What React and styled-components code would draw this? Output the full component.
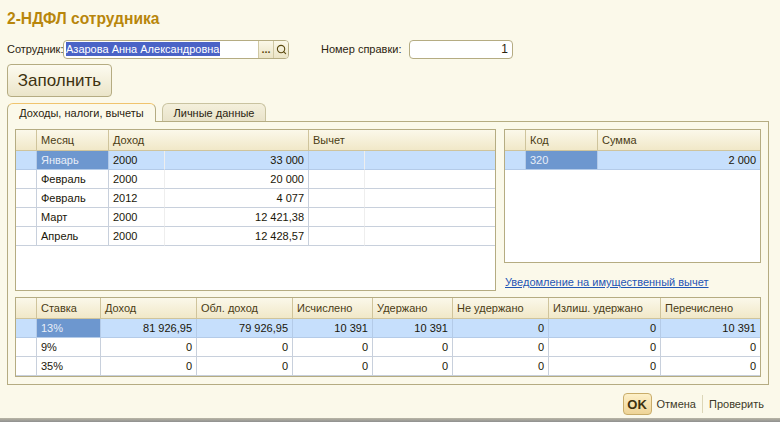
import React from "react";
import styled, { createGlobalStyle } from "styled-components";
import { Search } from "lucide-react";

const Global = createGlobalStyle`
  html, body { margin: 0; padding: 0; overflow: hidden; }
  body { font-family: "Liberation Sans", Arial, sans-serif; font-size: 11px; color: #2b2410; }
  * { box-sizing: border-box; }
`;

const Page = styled.div`
  width: 780px;
  height: 422px;
  background: #fbf9ea;
  display: flex;
  flex-direction: column;
  padding: 0 11px 0 7px;
  position: relative;
`;
const Title = styled.h1`
  margin: 0;
  height: 39px;
  padding-top: 10px;
  font-size: 15.6px;
  line-height: 18px;
  font-weight: bold;
  color: #b8860b;
`;
const FieldRow = styled.div`
  display: flex;
  align-items: center;
  height: 20px;
`;
const Label = styled.span`
  white-space: nowrap;
  width: ${p => p.$w}px;
  margin-left: ${p => p.$ml || 0}px;
`;
const Field = styled.div`
  width: ${p => p.$w}px;
  height: 19px;
  background: #fff;
  border: 1px solid #b5ac82;
  border-radius: 4px;
  display: flex;
  align-items: center;
  overflow: hidden;
  justify-content: ${p => (p.$right ? "flex-end" : "flex-start")};
  padding: ${p => (p.$right ? "0 4px 0 0" : "0 0 0 2px")};
  font-size: ${p => (p.$right ? 12 : 11)}px;
`;
const Selected = styled.span`
  background: #4a63c6;
  color: #fff;
  line-height: 14px;
  flex: 1;
  white-space: nowrap;
  max-width: 154px;
`;
const FieldBtn = styled.div`
  width: 15px;
  height: 100%;
  background: linear-gradient(#fbf8e8, #ebe4c6);
  border-left: 1px solid #d0c8a4;
  display: flex;
  align-items: center;
  justify-content: center;
  color: #5b4a10;
  font-weight: bold;
  &:first-of-type { margin-left: auto; }
`;
const FillButton = styled.div`
  width: 105px;
  height: 33px;
  margin-top: 5px;
  border: 1px solid #b5ac82;
  border-radius: 4px;
  background: linear-gradient(#fdfbf0, #ebe5c9);
  display: flex;
  align-items: center;
  justify-content: center;
  font-size: 17px;
  color: #3d3210;
`;
const Tabs = styled.div`
  display: flex;
  gap: 6px;
  margin-top: 6px;
  height: 18px;
  position: relative;
  z-index: 1;
`;
const Tab = styled.div`
  width: ${p => p.$w}px;
  height: ${p => (p.$active ? 19 : 18)}px;
  border: 1px solid ${p => (p.$active ? "#b5ac82" : "#c9c3a0")};
  border-top: 1px solid ${p => (p.$active ? "#f0c46e" : "#c9c3a0")};
  border-bottom: none;
  border-radius: 6px 6px 0 0;
  background: ${p => (p.$active ? "#fbf9ea" : "linear-gradient(#f4f0dc, #e9e3ca)")};
  display: flex;
  align-items: center;
  justify-content: center;
`;
const Panel = styled.div`
  width: 762px;
  height: 264px;
  border: 1px solid #b5ac82;
  padding: 7px;
  display: flex;
  flex-direction: column;
  gap: 6px;
`;
const TopRow = styled.div`
  display: grid;
  grid-template-columns: 481px 257px;
  column-gap: 8px;
`;
const Side = styled.div`
  display: flex;
  flex-direction: column;
`;
const Table = styled.div`
  height: ${p => p.$h}px;
  background: #fff;
  border: 1px solid #b5ac82;
  overflow: hidden;
`;
const Row = styled.div`
  display: grid;
  grid-template-columns: ${p => p.$cols};
  height: ${p => p.$h || 19}px;
`;
const Head = styled.div`
  display: flex;
  align-items: center;
  padding-left: 4px;
  color: #4a3c14;
  white-space: nowrap;
  overflow: hidden;
  background: linear-gradient(#fbf8ea, #f1e8c8);
  border-right: 1px solid #cfc49c;
  border-bottom: 1px solid #cfc49c;
  grid-column: span ${p => p.$span || 1};
  &:last-child { border-right: none; }
`;
const Cell = styled.div`
  display: flex;
  align-items: center;
  justify-content: ${p => (p.$num ? "flex-end" : "flex-start")};
  padding: 0 ${p => (p.$num ? 4 : 0)}px 0 ${p => (p.$num ? 0 : 4)}px;
  white-space: nowrap;
  color: ${p => (p.$cur ? "#e8eef8" : "#1a1608")};
  background: ${p => (p.$cur ? "#6d97cf" : p.$sel ? "#c6dffc" : "#fff")};
  border-right: 1px solid ${p => (p.$light ? "#eeeeee" : p.$sel ? "#b4cbe8" : "#c8d0dc")};
  border-bottom: 1px solid ${p => (p.$sel ? "#b4cbe8" : "#c8d0dc")};
  &:last-child { border-right: none; }
`;
const LinkRow = styled.a`
  margin-top: 12px;
  margin-left: 1px;
  color: #1f55b5;
  text-decoration: underline;
  line-height: 14px;
  white-space: nowrap;
`;
const Footer = styled.div`
  display: flex;
  align-items: center;
  justify-content: flex-end;
  margin-top: 8px;
  height: 22px;
  margin-right: 5px;
`;
const OkButton = styled.div`
  width: 29px;
  height: 22px;
  border: 1px solid #c9ad6a;
  border-radius: 4px;
  background: linear-gradient(#fdf0c8, #eed497);
  font-weight: bold;
  font-size: 13px;
  color: #3d3210;
  display: flex;
  align-items: center;
  justify-content: center;
  margin-right: 5px;
`;
const FootLink = styled.span`
  color: #3d3a28;
`;
const Sep = styled.div`
  width: 1px;
  height: 18px;
  margin: 0 6px 0 6px;
  background: #dcd6b8;
`;
const Band = styled.div`
  position: absolute;
  left: 0;
  right: 0;
  bottom: 0;
  height: 4px;
  background: linear-gradient(#b9b6a6, #8f8f8f);
`;

const monthCols = "21px 72px 56px 144px 56px 1fr";
const months = [
  ["Январь", "2000", "33 000"],
  ["Февраль", "2000", "20 000"],
  ["Февраль", "2012", "4 077"],
  ["Март", "2000", "12 421,38"],
  ["Апрель", "2000", "12 428,57"],
];
const codeCols = "21px 72px 1fr";
const rateCols = "21px 64px 96px 96px 80px 80px 96px 112px 1fr";
const rateHeads = ["Ставка", "Доход", "Обл. доход", "Исчислено", "Удержано", "Не удержано", "Излиш. удержано", "Перечислено"];
const rates = [
  ["13%", "81 926,95", "79 926,95", "10 391", "10 391", "0", "0", "10 391"],
  ["9%", "0", "0", "0", "0", "0", "0", "0"],
  ["35%", "0", "0", "0", "0", "0", "0", "0"],
];

export default function App() {
  return (
    <Page>
      <Global />
      <Title>2-НДФЛ сотрудника</Title>
      <FieldRow>
        <Label $w={56}>Сотрудник:</Label>
        <Field $w={226}>
          <Selected>Азарова Анна Александровна</Selected>
          <FieldBtn>...</FieldBtn>
          <FieldBtn><Search size={11} strokeWidth={2.4} /></FieldBtn>
        </Field>
        <Label $w={88} $ml={32}>Номер справки:</Label>
        <Field $w={104} $right>1</Field>
      </FieldRow>
      <FillButton>Заполнить</FillButton>
      <Tabs>
        <Tab $w={149} $active>Доходы, налоги, вычеты</Tab>
        <Tab $w={104}>Личные данные</Tab>
      </Tabs>
      <Panel>
        <TopRow>
          <Table $h={162}>
            <Row $cols={monthCols} $h={21}>
              <Head />
              <Head>Месяц</Head>
              <Head $span={2}>Доход</Head>
              <Head $span={2}>Вычет</Head>
            </Row>
            {months.map((m, i) => (
              <Row key={i} $cols={monthCols}>
                <Cell $sel={i === 0} />
                <Cell $sel={i === 0} $cur={i === 0}>{m[0]}</Cell>
                <Cell $sel={i === 0} $light>{m[1]}</Cell>
                <Cell $sel={i === 0} $num>{m[2]}</Cell>
                <Cell $sel={i === 0} $light />
                <Cell $sel={i === 0} />
              </Row>
            ))}
          </Table>
          <Side>
            <Table $h={134}>
              <Row $cols={codeCols} $h={21}>
                <Head />
                <Head>Код</Head>
                <Head>Сумма</Head>
              </Row>
              <Row $cols={codeCols}>
                <Cell $sel />
                <Cell $sel $cur>320</Cell>
                <Cell $sel $num>2 000</Cell>
              </Row>
            </Table>
            <LinkRow>Уведомление на имущественный вычет</LinkRow>
          </Side>
        </TopRow>
        <Table $h={80}>
          <Row $cols={rateCols} $h={21}>
            <Head />
            {rateHeads.map(h => <Head key={h}>{h}</Head>)}
          </Row>
          {rates.map((r, i) => (
            <Row key={i} $cols={rateCols}>
              <Cell $sel={i === 0} />
              {r.map((v, j) => (
                <Cell key={j} $sel={i === 0} $cur={i === 0 && j === 0} $num={j > 0}>{v}</Cell>
              ))}
            </Row>
          ))}
        </Table>
      </Panel>
      <Footer>
        <OkButton>OK</OkButton>
        <FootLink>Отмена</FootLink>
        <Sep />
        <FootLink>Проверить</FootLink>
      </Footer>
      <Band />
    </Page>
  );
}
